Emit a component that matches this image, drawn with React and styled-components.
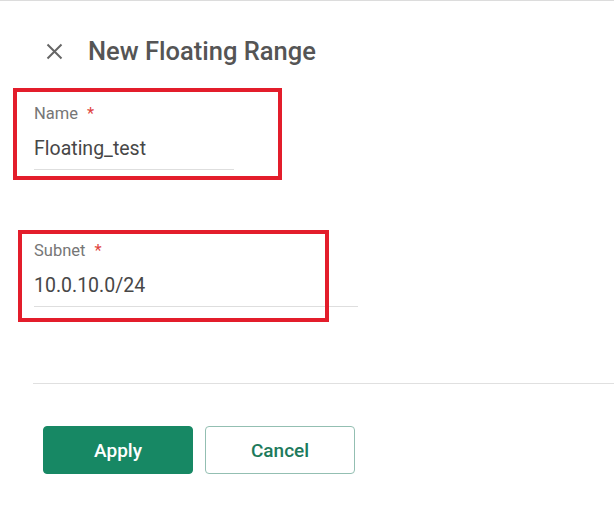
import styled, { createGlobalStyle } from 'styled-components';

const GlobalStyle = createGlobalStyle`
  body {
    margin: 0;
    background: #ffffff;
    font-family: Roboto, "Liberation Sans", sans-serif;
  }
`;

const Panel = styled.div`
  border-top: 1px solid #dcdcdc;
  min-height: 518px;
  overflow: hidden;
`;

const Header = styled.div`
  display: flex;
  align-items: center;
  gap: 25px;
  height: 40px;
  padding: 30px 0 0 46px;
`;

const CloseButton = styled.button`
  display: flex;
  padding: 0;
  border: none;
  background: none;
  cursor: pointer;
`;

const Title = styled.h1`
  margin: 0;
  font-size: 25.5px;
  font-weight: 500;
  color: #555555;
`;

const Field = styled.div`
  position: relative;
  width: ${(props) => props.width}px;
  margin: ${(props) => props.top}px 0 0 34px;
  padding-bottom: 8px;
  border-bottom: 1px solid #dedede;
`;

const Label = styled.div`
  font-size: 16.5px;
  line-height: 20px;
  color: #767676;
`;

const Required = styled.span`
  color: #e0443e;
  margin-left: 9px;
`;

const Value = styled.div`
  margin-top: 13px;
  font-size: 19.5px;
  line-height: 24px;
  color: #474747;
`;

/* red annotation frame drawn over the field */
const Highlight = styled.div`
  position: absolute;
  left: ${(props) => props.left}px;
  top: ${(props) => props.top}px;
  width: ${(props) => props.width}px;
  height: 92px;
  box-sizing: border-box;
  border: 4px solid #e31d2b;
  pointer-events: none;
`;

const Divider = styled.hr`
  margin: 76px 0 0 33px;
  border: none;
  border-top: 1px solid #e0e0e0;
`;

const Actions = styled.div`
  display: flex;
  gap: 12px;
  margin: 42px 0 0 43px;
`;

const Button = styled.button`
  width: 150px;
  height: 48px;
  box-sizing: border-box;
  border-radius: 4px;
  font-family: Roboto, "Liberation Sans", sans-serif;
  font-size: 19px;
  font-weight: 500;
  cursor: pointer;
  border: 1px solid ${(props) => (props.primary ? '#178864' : '#93bfb2')};
  background: ${(props) => (props.primary ? '#178864' : '#ffffff')};
  color: ${(props) => (props.primary ? '#ffffff' : '#1d7a5c')};
`;

const fields = [
  { label: 'Name', value: 'Floating_test', width: 200, top: 33, frame: { left: -21, top: -16, width: 269 } },
  { label: 'Subnet', value: '10.0.10.0/24', width: 324, top: 71, frame: { left: -16, top: -11, width: 311 } },
];

const App = () => {
  return (
    <>
      <GlobalStyle />
      <Panel>
        <Header>
          <CloseButton aria-label="Close">
            <svg width="17" height="17" viewBox="0 0 17 17">
              <path d="M1.5 1.5 L15.5 15.5 M15.5 1.5 L1.5 15.5" stroke="#666" strokeWidth="2" fill="none" />
            </svg>
          </CloseButton>
          <Title>New Floating Range</Title>
        </Header>

        {fields.map((field) => {
          return (
            <Field key={field.label} width={field.width} top={field.top}>
              <Label>
                {field.label}
                <Required>*</Required>
              </Label>
              <Value>{field.value}</Value>
              <Highlight left={field.frame.left} top={field.frame.top} width={field.frame.width} />
            </Field>
          );
        })}

        <Divider />

        <Actions>
          <Button primary>Apply</Button>
          <Button>Cancel</Button>
        </Actions>
      </Panel>
    </>
  );
};

export default App;
